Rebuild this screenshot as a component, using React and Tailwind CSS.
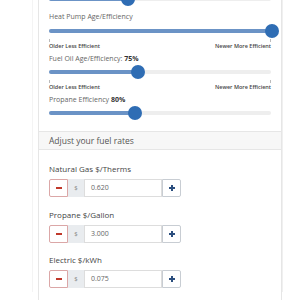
import React from 'react';

const Slider = ({ pos, className = '' }) => (
  <div className={`relative h-[14px] ${className}`}>
    <div className="absolute left-0 right-0 top-[5px] h-[4px] rounded-full bg-[#eeeeee]" />
    <div
      className="absolute left-0 top-[5px] h-[4px] rounded-full bg-[#6b93c6]"
      style={{ width: `${pos}px` }}
    />
    <div
      className="absolute top-0 h-[14px] w-[14px] -ml-[7px] rounded-full bg-[#2f6db4]"
      style={{ left: `${pos}px` }}
    />
  </div>
);

const Ends = () => (
  <>
    <div className="flex justify-between h-[4px]">
      <div className="w-px h-[3px] mt-[1px] bg-[#bbbbbb]" />
      <div className="w-px h-[3px] mt-[1px] bg-[#bbbbbb]" />
    </div>
    <div className="flex justify-between h-[8px] text-[5.5px] leading-[8px] font-semibold text-[#444]">
      <span>Older Less Efficient</span>
      <span>Newer More Efficient</span>
    </div>
  </>
);

const RateInput = ({ label, value, className = '' }) => (
  <div className={className}>
    <div className="h-[10px] text-[8px] leading-[10px] text-[#444]">{label}</div>
    <div className="flex mt-[5px] h-[18px] w-[132px]">
      <div className="w-[19px] flex items-center justify-center border border-[#dba7a7] rounded-l-[2px] bg-white">
        <div className="w-[6px] h-[2px] bg-[#c0392b]" />
      </div>
      <div className="w-[16px] flex items-center justify-center bg-[#e9ecef] text-[6px] text-[#888]">$</div>
      <div className="flex-1 flex items-center pl-[6px] border border-[#dddddd] text-[7px] text-[#666]">
        {value}
      </div>
      <div className="w-[19px] relative flex items-center justify-center border border-[#c8cdd3] rounded-r-[2px] bg-white">
        <div className="absolute w-[6px] h-[2px] bg-[#2b4e7e]" />
        <div className="absolute w-[2px] h-[6px] bg-[#2b4e7e]" />
      </div>
    </div>
  </div>
);

export default function App() {
  return (
    <div
      className="w-[300px] h-[300px] overflow-hidden bg-white"
      style={{ fontFamily: '"Open Sans", "Liberation Sans", sans-serif' }}
    >
      <div className="ml-[32px] w-[251px] h-[300px] border-l border-[#f4f4f4] border-r border-r-[#f0f0f0]">
        <div className="ml-[5px] w-[244px] border-x border-[#e6e6e6]">
          {/* sliders */}
          <div className="px-[10px] pb-[11px] border-b border-[#e6e6e6]">
            <Slider pos={79} className="-mt-[8px]" />
            <div className="mt-[6px] h-[10px] text-[7px] leading-[10px] text-[#666]">
              Heat Pump Age/Efficiency
            </div>
            <Slider pos={223} className="mt-[2px]" />
            <Ends />
            <div className="mt-[4px] h-[10px] text-[7px] leading-[10px] text-[#666]">
              Fuel Oil Age/Efficiency: <span className="font-bold text-[#333]">75%</span>
            </div>
            <Slider pos={89} className="mt-[1px]" />
            <Ends />
            <div className="mt-[4px] h-[10px] text-[7px] leading-[10px] text-[#666]">
              Propane Efficiency <span className="font-bold text-[#333]">80%</span>
            </div>
            <Slider pos={86} className="mt-[1px]" />
          </div>

          {/* fuel rates */}
          <div className="h-[18px] bg-[#f7f7f7] border-b border-[#e6e6e6] px-[10px] text-[8.5px] leading-[18px] text-[#555]">
            Adjust your fuel rates
          </div>
          <div className="px-[10px] pt-[14px] h-[160px]">
            <RateInput label="Natural Gas $/Therms" value="0.620" />
            <RateInput label="Propane $/Gallon" value="3.000" className="mt-[13px]" />
            <RateInput label="Electric $/kWh" value="0.075" className="mt-[12px]" />
          </div>
        </div>
      </div>
    </div>
  );
}
